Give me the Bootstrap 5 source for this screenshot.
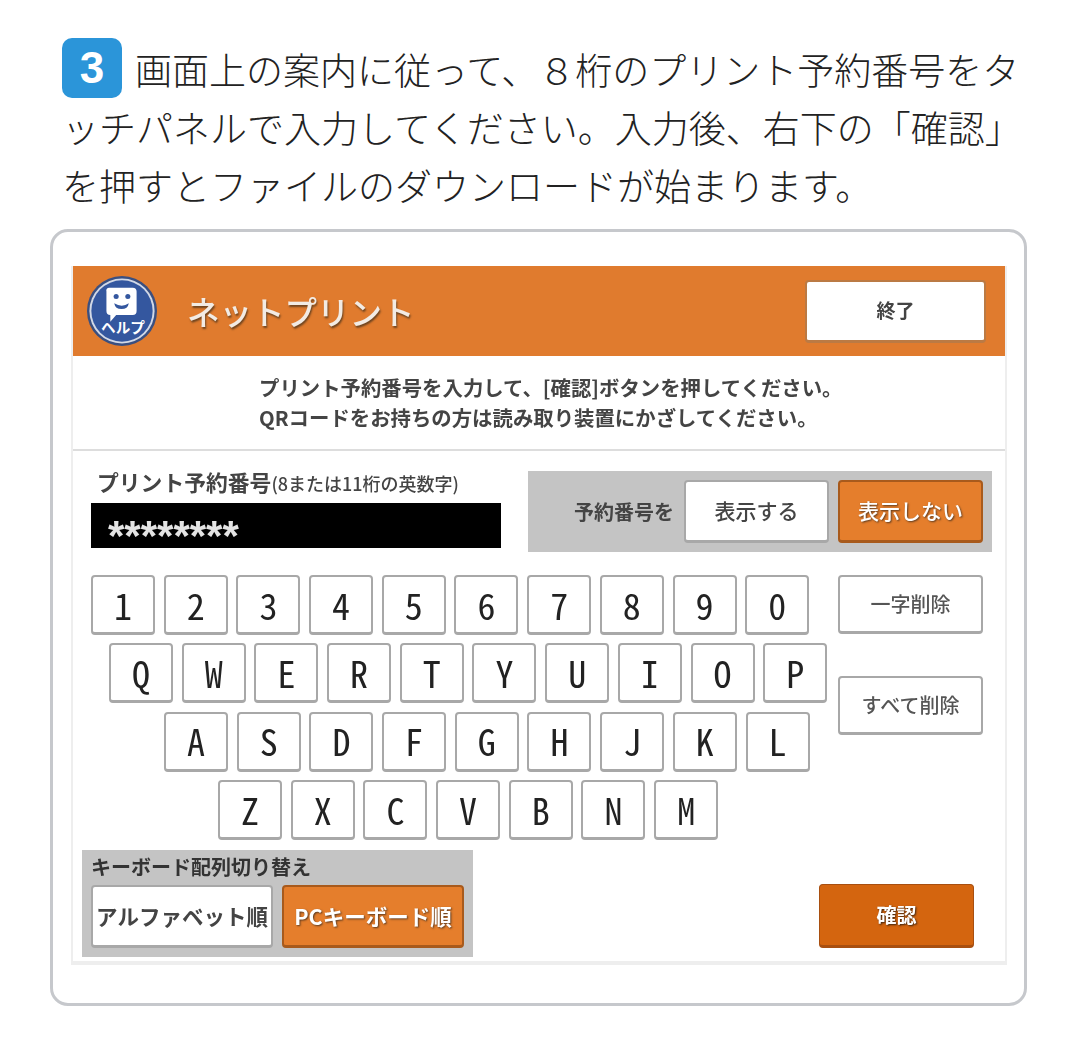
<!DOCTYPE html>
<html lang="ja">
<head>
<meta charset="utf-8">
<title>ネットプリント</title>
<link href="https://cdn.jsdelivr.net/npm/bootstrap@5.3.0/dist/css/bootstrap.min.css" rel="stylesheet">
<style>
html,body{background:#fff;overflow:hidden}
body{font-family:"Noto Sans CJK JP","Liberation Sans",sans-serif;width:1080px;height:1045px}
.intro{padding:40px 0 0 62px;margin:0 0 15px;font-size:37px;line-height:58px;color:#222;white-space:nowrap;font-weight:300}
.stepnum{display:inline-block;width:60px;height:60px;margin:-2px 13px -4px 0;background:#2b95d9;border-radius:10px;color:#fff;font:700 44px/60px "Liberation Sans",sans-serif;text-align:center;vertical-align:top}
.frame{margin-left:50px;width:977px;height:777px;border:3px solid #c6c8cc;border-radius:18px;padding:34px 20px 0}
.panel{width:932px;height:695px;box-shadow:0 2px 0 2px #eeeeee;filter:blur(.45px)}
.headbar{height:90px;background:#e07b2e;padding:0 19px 0 13px}
.title{margin-left:29px;font-size:32.5px;color:#f2ebe4;font-weight:500;text-shadow:1px 2px 2px #6d4420;line-height:1}
.tbtn{display:flex;align-items:center;justify-content:center;flex-shrink:0;font-weight:700;color:#444;background:#fff;border:2px solid #a8a8a8;border-bottom-width:3px;border-radius:4px;padding:0;line-height:1.1}
.tbtn.endbtn{width:181px;height:63px;font-size:19px;border-color:#bb7a44}
.msg{height:95px;border-bottom:2px solid #ddd;padding:16px 0 0 186px;font-size:20.4px;line-height:30px;color:#444;font-weight:700;white-space:nowrap}
.entry{padding:20px 0 0 18px}
.numcol{width:410px}
.numlabel{height:32px;padding-left:6px;font-size:21.8px;line-height:22px;font-weight:700;color:#444;white-space:nowrap}
.numlabel small{font-size:18px;font-weight:500}
.numbox{height:45px;background:#000;color:#e4e4e4;font:700 42px/25px "Liberation Sans",sans-serif;padding:20px 0 0 17px}
.showbox{margin-left:27px;width:464px;height:81px;background:#c4c4c4;padding:9px;gap:9px}
.showlabel{margin-right:1px;font-size:20px;font-weight:700;color:#444}
.wide{width:145px;height:63px;font-size:21px;font-weight:500}
.hot{background:#e57e2c;color:#fff;border-color:#a85a1c;text-shadow:1px 1px 2px #5a3a20}
.kbd{padding:23px 0 0 18px}
.keysbox{width:720px}
.keyline{gap:8.7px;height:60px;margin-bottom:8.4px}
.off1{padding-left:18px}.off2{padding-left:73px}.off3{padding-left:127px}
.keycap{width:64px;height:60px;font-size:36px;font-weight:400;font-feature-settings:"hwid";color:#222}
.delcol{margin-left:27px;width:145px;gap:42px}
.delbtn{width:145px;height:59px;font-size:20px;font-weight:500;color:#555}
.bottomrow{padding:0 31px 0 9px;margin-top:1px}
.orderbox{width:391px;height:107px;background:#c4c4c4;padding:4px 9px 9px}
.ordertitle{height:31px;font-size:20px;line-height:26px;font-weight:700;color:#333;white-space:nowrap}
.orderrow{gap:9px}
.orderbtn{width:182px;height:63px;font-size:21.5px;white-space:nowrap}
.okbtn{width:155px;height:64px;margin-bottom:9px;background:#d4650f;color:#fff;border:1px solid #a84f10;border-bottom-width:3px;font-size:20px;text-shadow:1px 1px 2px #3c2410}
</style>
</head>
<body>
<p class="intro"><span class="stepnum">3</span>画面上の案内に従って、８桁のプリント予約番号をタ<br>ッチパネルで入力してください。入力後、右下の「確認」<br>を押すとファイルのダウンロードが始まります。</p>
<div class="frame">
<div class="panel">
  <div class="headbar d-flex align-items-center">
    <svg width="72" height="72" viewBox="0 0 74 74" role="img" aria-label="ヘルプ">
      <circle cx="37" cy="37" r="36" fill="#3a4f80"/>
      <circle cx="37" cy="37" r="33.5" fill="#d3d9e6"/>
      <circle cx="37" cy="37" r="31.500" fill="#34579f"/>
      <path d="M24 13h24a4 4 0 0 1 4 4v20a4 4 0 0 1-4 4H31l-6 7 0-7a4 4 0 0 1-4-4V17a3 3 0 0 1 3-4z" fill="#fff"/>
      <circle cx="31" cy="22" r="2.600" fill="#34579f"/><circle cx="43" cy="22" r="2.600" fill="#34579f"/>
      <path d="M29 29q8 5 15 0q-1 6-7.500 6t-7.500-6z" fill="#34579f"/>
      <text x="38" y="60" text-anchor="middle" font-size="15" font-weight="700" fill="#fff" font-family="Noto Sans CJK JP, sans-serif">ヘルプ</text>
    </svg>
    <div class="title">ネットプリント</div>
    <button class="btn tbtn endbtn ms-auto" type="button">終了</button>
  </div>
  <div class="msg">プリント予約番号を入力して、[確認]ボタンを押してください。<br>QRコードをお持ちの方は読み取り装置にかざしてください。</div>
  <div class="entry d-flex">
    <div class="numcol">
      <div class="numlabel">プリント予約番号<small>(8または11桁の英数字)</small></div>
      <div class="numbox">********</div>
    </div>
    <div class="showbox d-flex align-items-center justify-content-end">
      <span class="showlabel">予約番号を</span>
      <button class="btn tbtn wide" type="button">表示する</button>
      <button class="btn tbtn wide hot" type="button">表示しない</button>
    </div>
  </div>
  <div class="kbd d-flex">
    <div class="keysbox">
      <div class="keyline d-flex"><button class="btn tbtn keycap" type="button">1</button><button class="btn tbtn keycap" type="button">2</button><button class="btn tbtn keycap" type="button">3</button><button class="btn tbtn keycap" type="button">4</button><button class="btn tbtn keycap" type="button">5</button><button class="btn tbtn keycap" type="button">6</button><button class="btn tbtn keycap" type="button">7</button><button class="btn tbtn keycap" type="button">8</button><button class="btn tbtn keycap" type="button">9</button><button class="btn tbtn keycap" type="button">0</button></div>
      <div class="keyline off1 d-flex"><button class="btn tbtn keycap" type="button">Q</button><button class="btn tbtn keycap" type="button">W</button><button class="btn tbtn keycap" type="button">E</button><button class="btn tbtn keycap" type="button">R</button><button class="btn tbtn keycap" type="button">T</button><button class="btn tbtn keycap" type="button">Y</button><button class="btn tbtn keycap" type="button">U</button><button class="btn tbtn keycap" type="button">I</button><button class="btn tbtn keycap" type="button">O</button><button class="btn tbtn keycap" type="button">P</button></div>
      <div class="keyline off2 d-flex"><button class="btn tbtn keycap" type="button">A</button><button class="btn tbtn keycap" type="button">S</button><button class="btn tbtn keycap" type="button">D</button><button class="btn tbtn keycap" type="button">F</button><button class="btn tbtn keycap" type="button">G</button><button class="btn tbtn keycap" type="button">H</button><button class="btn tbtn keycap" type="button">J</button><button class="btn tbtn keycap" type="button">K</button><button class="btn tbtn keycap" type="button">L</button></div>
      <div class="keyline off3 d-flex"><button class="btn tbtn keycap" type="button">Z</button><button class="btn tbtn keycap" type="button">X</button><button class="btn tbtn keycap" type="button">C</button><button class="btn tbtn keycap" type="button">V</button><button class="btn tbtn keycap" type="button">B</button><button class="btn tbtn keycap" type="button">N</button><button class="btn tbtn keycap" type="button">M</button></div>
    </div>
    <div class="delcol d-flex flex-column">
      <button class="btn tbtn delbtn" type="button">一字削除</button>
      <button class="btn tbtn delbtn" type="button">すべて削除</button>
    </div>
  </div>
  <div class="bottomrow d-flex align-items-end justify-content-between">
    <div class="orderbox">
      <div class="ordertitle">キーボード配列切り替え</div>
      <div class="orderrow d-flex">
        <button class="btn tbtn orderbtn" type="button">アルファベット順</button>
        <button class="btn tbtn orderbtn hot" type="button">PCキーボード順</button>
      </div>
    </div>
    <button class="btn tbtn okbtn" type="button">確認</button>
  </div>
</div>
</div>
<script src="https://cdn.jsdelivr.net/npm/bootstrap@5.3.0/dist/js/bootstrap.bundle.min.js"></script>
</body>
</html>
